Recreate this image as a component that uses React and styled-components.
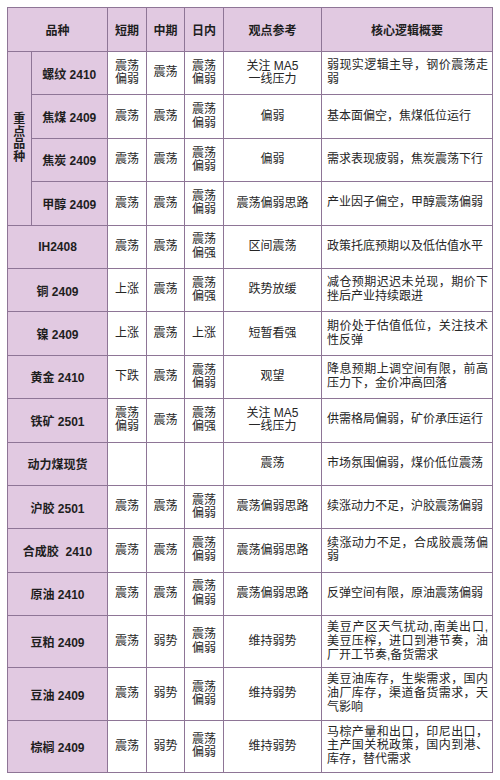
import styled, { createGlobalStyle } from "styled-components";

const GlobalStyle = createGlobalStyle`
  html, body {
    margin: 0;
    padding: 0;
    background: #fff;
  }
  body {
    font-family: "Liberation Sans", "Noto Sans CJK SC", sans-serif;
    color: #222;
  }
`;

const Page = styled.div`
  padding: 7px 0 0 7px;
`;

const Table = styled.table`
  width: 485px;
  table-layout: fixed;
  border-collapse: collapse;
  font-size: 12px;
  border: 1px solid #8e7596;
`;

const Row = styled.tr`
  height: ${(p) => (p.$tall ? "52.3px" : "43.4px")};
`;

const HeadRow = styled.tr`
  height: 44px;
`;

const HeadCell = styled.th`
  background: #e1c9e1;
  border: 1px solid #8e7596;
  font-weight: bold;
  color: #1e1e1e;
  text-align: center;
  padding: 0 2px;
`;

const GroupCell = styled.th`
  background: #e1c9e1;
  border: 1px solid #8e7596;
  font-weight: bold;
  color: #1e1e1e;
  text-align: center;
  padding: 0;
`;

const VerticalLabel = styled.div`
  width: 12px;
  margin: 0 auto;
  line-height: 12.5px;
  word-break: break-all;
`;

const NameCell = styled.th`
  background: #e1c9e1;
  border: 1px solid #8e7596;
  font-weight: bold;
  color: #1e1e1e;
  text-align: center;
  padding: 0 2px;
  white-space: nowrap;
`;

const Cell = styled.td`
  border: 1px solid #8e7596;
  text-align: center;
  padding: 0 6px;
  line-height: 13.4px;
  color: #262626;
`;

const LogicCell = styled.td`
  border: 1px solid #8e7596;
  text-align: justify;
  padding: 0 4px 0 5px;
  line-height: 13.8px;
  color: #262626;
`;

const rows = [
  { name: "螺纹 2410", group: true, s: "震荡偏弱", m: "震荡", d: "震荡偏弱", v: ["关注 MA5", "一线压力"], l: "弱现实逻辑主导，钢价震荡走弱" },
  { name: "焦煤 2409", group: true, s: "震荡", m: "震荡", d: "震荡偏弱", v: ["偏弱"], l: "基本面偏空，焦煤低位运行" },
  { name: "焦炭 2409", group: true, s: "震荡", m: "震荡", d: "震荡偏弱", v: ["偏弱"], l: "需求表现疲弱，焦炭震荡下行" },
  { name: "甲醇 2409", group: true, s: "震荡", m: "震荡", d: "震荡偏弱", v: ["震荡偏弱思路"], l: "产业因子偏空，甲醇震荡偏弱" },
  { name: "IH2408", s: "震荡", m: "震荡", d: "震荡偏强", v: ["区间震荡"], l: "政策托底预期以及低估值水平" },
  { name: "铜 2409", s: "上涨", m: "震荡", d: "震荡偏强", v: ["跌势放缓"], l: "减仓预期迟迟未兑现，期价下挫后产业持续跟进" },
  { name: "镍 2409", s: "上涨", m: "震荡", d: "上涨", v: ["短暂看强"], l: "期价处于估值低位，关注技术性反弹" },
  { name: "黄金 2410", s: "下跌", m: "震荡", d: "震荡偏弱", v: ["观望"], l: "降息预期上调空间有限，前高压力下，金价冲高回落" },
  { name: "铁矿 2501", s: "震荡偏弱", m: "震荡", d: "震荡偏强", v: ["关注 MA5", "一线压力"], l: "供需格局偏弱，矿价承压运行" },
  { name: "动力煤现货", s: "", m: "", d: "", v: ["震荡"], l: "市场氛围偏弱，煤价低位震荡" },
  { name: "沪胶 2501", s: "震荡", m: "震荡", d: "震荡偏弱", v: ["震荡偏弱思路"], l: "续涨动力不足，沪胶震荡偏弱" },
  { name: "合成胶\u00a0 2410", s: "震荡", m: "震荡", d: "震荡偏弱", v: ["震荡偏弱思路"], l: "续涨动力不足，合成胶震荡偏弱" },
  { name: "原油 2410", s: "震荡", m: "震荡", d: "震荡偏弱", v: ["震荡偏弱思路"], l: "反弹空间有限，原油震荡偏弱" },
  { name: "豆粕 2409", tall: true, s: "震荡", m: "弱势", d: "震荡偏弱", v: ["维持弱势"], l: "美豆产区天气扰动,南美出口,美豆压榨，进口到港节奏，油厂开工节奏,备货需求" },
  { name: "豆油 2409", tall: true, s: "震荡", m: "弱势", d: "震荡偏弱", v: ["维持弱势"], l: "美豆油库存，生柴需求，国内油厂库存，渠道备货需求，天气影响" },
  { name: "棕榈 2409", tall: true, s: "震荡", m: "弱势", d: "震荡偏弱", v: ["维持弱势"], l: "马棕产量和出口，印尼出口，主产国关税政策，国内到港、库存，替代需求" },
];

export default function App() {
  return (
    <Page>
      <GlobalStyle />
      <Table>
        <colgroup>
          <col style={{ width: "23.5px" }} />
          <col style={{ width: "76.5px" }} />
          <col style={{ width: "39px" }} />
          <col style={{ width: "38px" }} />
          <col style={{ width: "39px" }} />
          <col style={{ width: "98px" }} />
          <col style={{ width: "171px" }} />
        </colgroup>
        <thead>
          <HeadRow>
            <HeadCell colSpan={2}>品种</HeadCell>
            <HeadCell>短期</HeadCell>
            <HeadCell>中期</HeadCell>
            <HeadCell>日内</HeadCell>
            <HeadCell>观点参考</HeadCell>
            <HeadCell>核心逻辑概要</HeadCell>
          </HeadRow>
        </thead>
        <tbody>
          {rows.map((r, i) => (
            <Row key={r.name} $tall={r.tall}>
              {i === 0 && (
                <GroupCell rowSpan={4}>
                  <VerticalLabel>重点品种</VerticalLabel>
                </GroupCell>
              )}
              <NameCell colSpan={r.group ? 1 : 2}>{r.name}</NameCell>
              <Cell>{r.s}</Cell>
              <Cell>{r.m}</Cell>
              <Cell>{r.d}</Cell>
              <Cell>
                {r.v.map((t, k) => (
                  <div key={k}>{t}</div>
                ))}
              </Cell>
              <LogicCell>{r.l}</LogicCell>
            </Row>
          ))}
        </tbody>
      </Table>
    </Page>
  );
}
